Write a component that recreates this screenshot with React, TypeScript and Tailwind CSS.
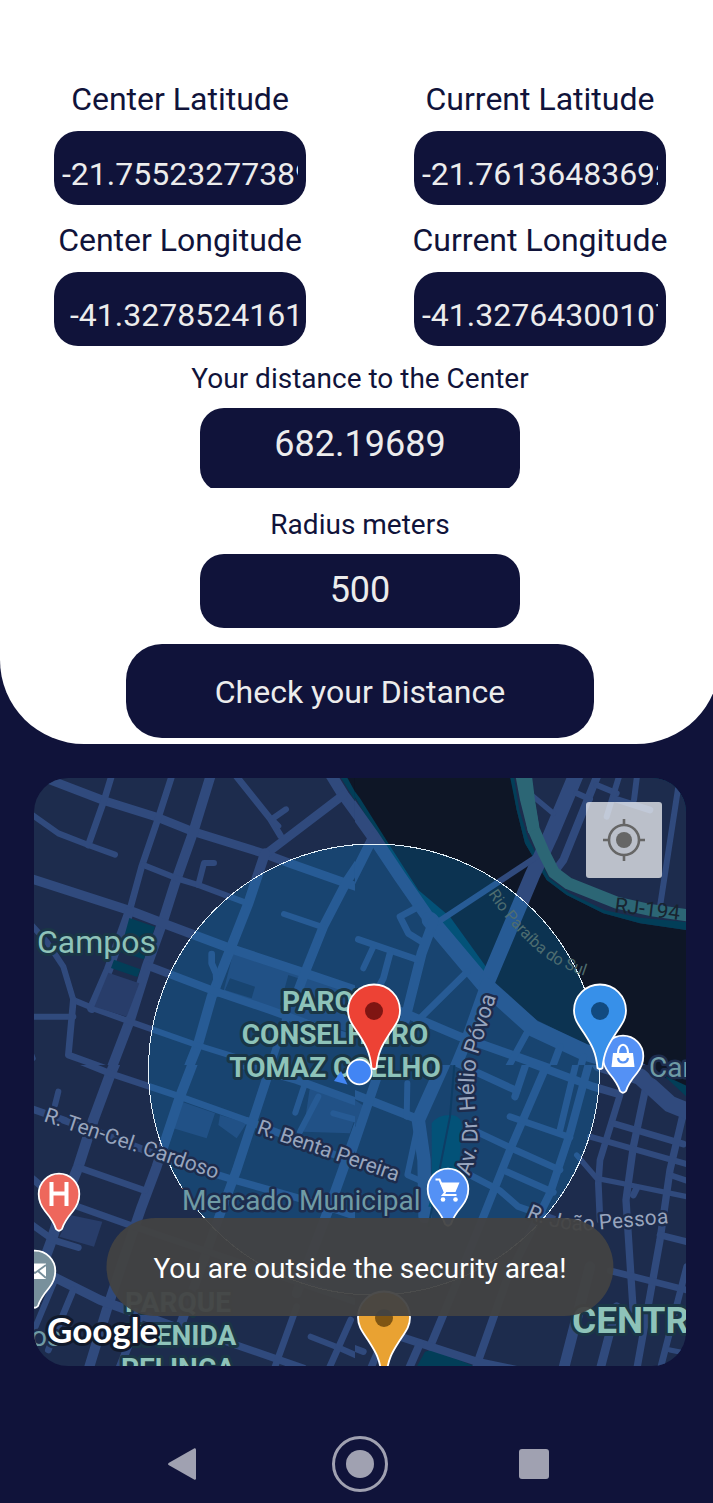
import type { ReactNode } from 'react';

type Road = [width: number, d: string];

const LAND = '#1d2c4d';
const ROAD = '#304a7d';
const PARK = '#023e58';
const WATER = '#0e1626';
const BLOCK = '#283d6a';
const HIGHWAY = '#2c6675';

const northWest: Road[] = [
  [26, 'M40 22 222 92 385 143 490 185 700 250 780 280 950 340 1010 360'],
  [20, 'M247 10 222 92 175 225'],
  [18, 'M0 130 85 190 175 225 255 254'],
  [20, 'M428 10 385 143 335 290 298 425'],
  [30, 'M544 10 490 185 435 340 400 450 350 590 300 750 235 920'],
  [28, 'M0 325 300 422 400 460 600 535 820 608 1010 672'],
  [18, 'M340 285 440 325 505 345 645 397'],
  [18, 'M505 345 522 279 552 279'],
  [20, 'M612 10 720 145 752 198'],
  [18, 'M768 118 725 148 745 168'],
  [34, 'M900 10 940 75 1010 170'],
  [26, 'M940 75 710 250'],
  [30, 'M705 250 655 400 600 540 545 680 505 820 465 920'],
  [28, 'M1040 200 950 335 880 470 820 620 805 660'],
  [18, 'M762 432 880 472'],
  [20, 'M545 552 545 580 558 610 562 670'],
  [24, 'M355 588 550 662 720 720 900 785 1000 815'],
  [28, 'M298 425 235 600 185 715'],
  [18, 'M0 460 50 515 100 590 130 690 190 715 300 755 500 825 620 862'],
  [18, 'M0 740 130 740'],
  [20, 'M130 690 115 855 240 900'],
  [18, 'M0 845 8 865'],
  [22, 'M770 740 730 860'],
];

const northEast: Road[] = [
  [38, 'M-30 60 70 200 150 320 240 450'],
  [50, 'M240 450 400 640 550 775 700 845 850 890 1030 1010'],
  [46, 'M680 10 600 200 545 320 410 640'],
  [34, 'M410 640 350 810 300 930'],
  [18, 'M250 465 560 260'],
  [20, 'M215 405 150 440 175 490 215 515'],
  [30, 'M250 455 215 550 165 750'],
  [20, 'M25 508 200 568'],
  [18, 'M70 530 40 595'],
  [20, 'M120 550 100 625 60 700'],
  [20, 'M352 605 200 755'],
  [26, 'M130 715 330 800 640 910'],
  [20, 'M530 790 470 900'],
  [22, 'M630 830 600 910'],
  [22, 'M700 860 685 920'],
  [30, 'M70 200 0 340'],
  [16, 'M548 78 610 130'],
  [24, 'M745 10 640 270 610 310'],
  [18, 'M680 70 720 88'],
  [18, 'M740 45 800 70'],
  [18, 'M810 10 770 140'],
  [18, 'M862 10 852 90'],
  [20, 'M790 85 900 120'],
  [18, 'M985 50 930 410'],
];

const southWest: Road[] = [
  [32, 'M268 -20 240 45 190 180 145 320 100 430 65 540 10 690'],
  [20, 'M90 -20 240 40 450 110 660 185'],
  [30, 'M500 -20 450 110 380 320 335 440 280 600 230 750 175 930'],
  [22, 'M0 145 200 215 420 300 620 362 860 430 1010 480'],
  [18, 'M85 95 75 135'],
  [20, 'M145 322 345 392'],
  [28, 'M735 -20 620 330 560 490 450 800'],
  [18, 'M825 70 796 158'],
  [18, 'M865 110 810 215'],
  [24, 'M620 10 800 60 1020 140'],
  [30, 'M1060 30 985 200 910 410 800 700'],
  [18, 'M910 160 1010 188'],
  [22, 'M650 182 1110 360'],
  [20, 'M130 435 290 492 460 550 990 730'],
  [22, 'M0 350 60 400'],
  [20, 'M0 490 70 540 145 563'],
  [28, 'M50 640 210 720 430 800'],
  [18, 'M0 840 75 660'],
  [20, 'M130 690 55 870'],
  [24, 'M330 770 270 920'],
  [20, 'M440 810 560 850'],
  [22, 'M590 845 820 925'],
  [18, 'M842 830 930 865 1010 900'],
  [20, 'M962 780 895 930'],
  [20, 'M800 740 735 920'],
  [18, 'M0 890 30 920'],
];

const southEast: Road[] = [
  [26, 'M-20 90 210 180'],
  [18, 'M172 70 170 170'],
  [28, 'M105 -20 0 290'],
  [40, 'M295 -20 205 180 222 300 225 470'],
  [18, 'M205 190 172 345 240 375'],
  [22, 'M300 0 500 92'],
  [24, 'M300 -80 410 -40 730 80 805 102'],
  [24, 'M605 -20 480 270 400 470 290 740 240 860'],
  [24, 'M725 -20 660 220 600 400 470 660 380 915'],
  [20, 'M685 -20 630 210'],
  [22, 'M535 -10 495 110'],
  [20, 'M480 170 660 232'],
  [20, 'M380 215 500 272 630 330'],
  [20, 'M470 335 610 397'],
  [20, 'M350 340 450 392 505 440 620 480'],
  [20, 'M810 105 750 300 745 370 750 480'],
  [16, 'M680 285 740 355 840 375 1010 410'],
  [22, 'M890 70 850 260 828 420 850 760'],
  [20, 'M790 190 1000 252'],
  [18, 'M720 230 1010 312'],
  [22, 'M1000 160 960 330 930 540 860 930'],
  [20, 'M850 405 860 385'],
  [20, 'M780 632 1010 690'],
  [20, 'M930 525 1010 545'],
  [18, 'M960 345 1010 362'],
  [20, 'M1010 620 930 930'],
  [24, 'M150 830 380 905 500 930'],
  [32, 'M640 930 720 620'],
  [26, 'M750 930 800 740'],
  [24, 'M210 850 175 930'],
  [20, 'M0 860 40 875'],
  [22, 'M90 860 60 930'],
  [50, 'M750 10 870 50 960 132 1030 160'],
  [16, 'M960 870 1010 880'],
];

function Roads({ list }: { list: Road[] }) {
  return (
    <g fill="none" stroke={ROAD} strokeLinecap="round" strokeLinejoin="round">
      {list.map(([width, d]) => (
        <path key={d} d={d} strokeWidth={width} />
      ))}
    </g>
  );
}

function Tile({ id, x, y, box, children }: { id: string; x: number; y: number; box: [number, number, number, number]; children: ReactNode }) {
  return (
    <g transform={`translate(${x} ${y}) scale(0.33333)`}>
      <clipPath id={id}>
        <rect x={box[0]} y={box[1]} width={box[2]} height={box[3]} />
      </clipPath>
      <g clipPath={`url(#${id})`}>{children}</g>
    </g>
  );
}

function Pin({ x, y, fill, dot }: { x: number; y: number; fill: string; dot: string }) {
  return (
    <g transform={`translate(${x} ${y})`}>
      <path
        d="M-2.5 -1C-4 -18 -9 -25 -16 -36C-22 -45 -26 -50 -26 -58.500A26 26 0 0 1 26 -58.500C26 -50 22 -45 16 -36C9 -25 4 -18 2.500 -1Q0 1 -2.500 -1Z"
        fill={fill}
        stroke="#fff"
        strokeWidth="1.800"
      />
      <circle cy="-58" r="9" fill={dot} />
    </g>
  );
}

function PoiPin({ x, y, fill, children }: { x: number; y: number; fill: string; children: ReactNode }) {
  return (
    <g transform={`translate(${x} ${y})`}>
      <path
        d="M-3 35C-5 28 -9 23 -14 17C-18 12 -20.300 7 -20.300 0A20.300 20.300 0 0 1 20.300 0C20.300 7 18 12 14 17C9 23 5 28 3 35Q0 38.500 -3 35Z"
        fill={fill}
        stroke="#fff"
        strokeWidth="1.800"
      />
      {children}
    </g>
  );
}

function MapDrawing() {
  return (
    <svg viewBox="34 778 652 588" preserveAspectRatio="xMidYMid slice" className="block size-full font-['Roboto',sans-serif]" role="img" aria-label="Map">
      <rect x="34" y="778" width="652" height="588" fill={LAND} />

      <Tile id="nw" x={30} y={770} box={[0, 0, 975, 885]}>
        <path d="M610 548 800 610 1000 680 1000 800 740 720 580 665Z" fill={BLOCK} />
        <path d="M600 625 675 650 665 685 585 660Z" fill={LAND} />
        <path d="M775 615 805 625 780 715 750 705Z" fill={LAND} />
        <path d="M925 10 1010 10 1010 150Z" fill={PARK} />
        <path d="M945 10 1010 10 1010 130Z" fill={WATER} />
        <Roads list={northWest} />
        <path d="M235 608 328 640 290 740 193 710Z" fill={BLOCK} />
        <path d="M298 444 375 470 342 568 270 545ZM252 569 331 598 322 621 243 594Z" fill={PARK} />
      </Tile>

      <Tile id="ne" x={350} y={770} box={[15, 0, 1020, 885]}>
        <path d="M-40 0 480 0 500 120 525 220 590 330 650 375 760 430 870 460 1020 482V960L850 890 700 820 560 750 400 620 200 360Z" fill={WATER} />
        <path d="M-40 -10 30 85 115 220 205 360 300 440 415 600 400 640 240 450 100 225Z" fill={PARK} />
        <path d="M478 10H1020V482L870 460 760 430 650 375 590 330 525 220 500 120Z" fill={PARK} />
        <path d="M490 10 508 120 534 205 598 325 656 368 765 421 870 443 1020 457V0Z" fill={LAND} />
        <Roads list={northEast} />
        <path d="M521 10 550 175 580 245 612 308 655 340 800 398 900 420 1020 437" fill="none" stroke={HIGHWAY} strokeWidth="36" strokeLinejoin="round" />
        <path d="M495 10H545L555 90 568 170 535 190 510 90Z" fill={HIGHWAY} />
      </Tile>

      <Tile id="sw" x={30} y={1060} box={[0, 15, 975, 930]}>
        <path d="M440 120 555 160 530 235 430 205ZM570 165 650 190 620 235 565 195ZM840 80 990 130 960 220 820 215Z" fill={BLOCK} />
        <path d="M120 465 217 485 192 560 88 530Z" fill={BLOCK} />
        <Roads list={southWest} />
      </Tile>

      <Tile id="se" x={350} y={1060} box={[15, 15, 1020, 930]}>
        <path d="M0 110 45 140 25 200 0 190Z" fill={BLOCK} />
        <path d="M890 0H1020V85L940 50Z" fill={WATER} />
        <path d="M940 45 1020 82V120Z" fill={PARK} />
        <path d="M195 930 225 875 250 868 400 930Z" fill={PARK} />
        <Roads list={southEast} />
        <path d="M245 190Q262 165 300 165Q335 165 335 200L320 440H235L246 400Z" fill={PARK} />
        <path d="M316 -20 300 170 235 500" fill="none" stroke="#10233f" strokeWidth="6" />
      </Tile>

      <circle cx="374" cy="1069.500" r="225.500" fill="rgba(7,157,239,0.22)" stroke="#e8f4fb" strokeWidth="1" shapeRendering="crispEdges" />

      <g fill="#98a5be" stroke={LAND} strokeWidth="5" strokeLinejoin="round" paintOrder="stroke" fontSize="21">
        <text transform="translate(43 1121) rotate(18.500)">R. Ten-Cel. Cardoso</text>
        <text transform="translate(256 1133) rotate(19)">R. Benta Pereira</text>
        <path id="helio" d="M469 1176Q481 1150 476 1115Q471 1075 480 1048L503 975" fill="none" stroke="none" />
        <text fontSize="22">
          <textPath href="#helio">Av. Dr. Hélio Póvoa</textPath>
        </text>
        <path id="joao" d="M526 1217Q560 1233 595 1230Q630 1227 690 1221" fill="none" stroke="none" />
        <text>
          <textPath href="#joao">R. João Pessoa</textPath>
        </text>
      </g>
      <path id="rio" d="M488 894Q512 930 542 955Q560 970 612 984" fill="none" />
      <text fill="#4e6d70" fontSize="16">
        <textPath href="#rio">Rio Paraíba do Sul</textPath>
      </text>
      <text fill="#182430" fontSize="21" transform="translate(614 912) rotate(7)">RJ-194</text>

      <g fill="#8ec3b9" stroke="#1a3646" strokeWidth="6" strokeLinejoin="round" paintOrder="stroke">
        <text x="37" y="953" fontSize="32">Campos</text>
        <g fontSize="28" fontWeight="700" textAnchor="middle">
          <text x="335" y="1011">PARQUE</text>
          <text x="335" y="1044">CONSELHEIRO</text>
          <text x="335" y="1077">TOMAZ COELHO</text>
          <text x="178" y="1312">PARQUE</text>
          <text x="178" y="1345">AVENIDA</text>
          <text x="178" y="1378">PELINCA</text>
        </g>
        <text x="572" y="1333" fontSize="37" fontWeight="700">CENTRO</text>
      </g>
      <g fill="#6f9ba5" stroke={LAND} strokeWidth="5" strokeLinejoin="round" paintOrder="stroke" fontSize="28">
        <text x="182" y="1210">Mercado Municipal</text>
        <text x="649" y="1077">Cam</text>
        <text x="31" y="1346">os</text>
      </g>

      <PoiPin x={59} y={1194} fill="#ee675c">
        <path d="M-7.500 -12V12M7.500 -12V12M-7.500 -.5H7.500" stroke="#fff" strokeWidth="4" fill="none" />
      </PoiPin>
      <PoiPin x={35} y={1271} fill="#78909c">
        <path d="M-11 -7.500H11V8H-11Z" fill="#fff" />
        <path d="M-11 -6 0 2 11 -6M3 0 11 7M-3 0 -11 7" fill="none" stroke="#78909c" strokeWidth="1.800" />
      </PoiPin>
      <PoiPin x={448} y={1189} fill="#5491f5">
        <path d="M-12.500 -9.500H-8.500L-3 3.500-5 6H8.500" fill="none" stroke="#fff" strokeWidth="2" />
        <path d="M-8 -6.500H11.500L7.500 3H-4Z" fill="#fff" />
        <circle cx="-5" cy="10.500" r="2.300" fill="#fff" />
        <circle cx="7.500" cy="10.500" r="2.300" fill="#fff" />
      </PoiPin>
      <PoiPin x={623} y={1056} fill="#5491f5">
        <path d="M-10 -3H10L11.500 11H-11.500Z" fill="#fff" />
        <path d="M-5 -3C-5 -14 5 -14 5 -3" fill="none" stroke="#fff" strokeWidth="2.200" />
        <path d="M-5 2C-4 8 4 8 5 2" fill="none" stroke="#5491f5" strokeWidth="2.200" />
      </PoiPin>

      <Pin x={600} y={1069} fill="#3790e9" dot="#114a80" />
      <Pin x={374} y={1069} fill="#ed4235" dot="#7f1512" />
      <Pin x={384} y={1376} fill="#e9a232" dot="#7f5513" />
      <path d="M341 1071 334 1081 347.500 1084.500Z" fill="#4285f4" />
      <circle cx="359.500" cy="1072" r="12.300" fill="#4285f4" stroke="#fff" strokeWidth="1.800" />

      <text x="47" y="1343" fontSize="35" fontWeight="700" className="font-['Lato',sans-serif]" fill="#fff" stroke="#111a2c" strokeWidth="6" strokeLinejoin="round" paintOrder="stroke">
        Google
      </text>
    </svg>
  );
}

const field = 'block h-[74px] rounded-3xl bg-[#10133a] text-[#ececec] outline-none';

function Coordinate({ id, label, value, inset = 'px-2' }: { id: string; label: string; value: string; inset?: string }) {
  return (
    <div className="flex flex-col items-center">
      <label htmlFor={id} className="mb-3 text-[32px] leading-[39px] whitespace-nowrap">
        {label}
      </label>
      <input id={id} defaultValue={value} className={`${field} ${inset} w-[70%] pt-3 text-[32px]`} />
    </div>
  );
}

export default function App() {
  return (
    <div className="overflow-hidden bg-[#10133a] font-['Roboto',sans-serif] text-[#10133a]">
      <div className="-mr-[7px]">
        <form className="flex flex-col items-center rounded-b-[84px] bg-white pt-20 pb-[6px]" onSubmit={(e) => e.preventDefault()}>
          <div className="grid w-full grid-cols-2 gap-y-4">
            <Coordinate id="center-lat" label="Center Latitude" value="-21.7552327738934" />
            <Coordinate id="current-lat" label="Current Latitude" value="-21.7613648369237" />
            <Coordinate id="center-lng" label="Center Longitude" value="-41.32785241617" inset="pl-4 pr-2" />
            <Coordinate id="current-lng" label="Current Longitude" value="-41.3276430010789" />
          </div>

          <label htmlFor="distance" className="mt-4 mb-3 text-[28px] leading-[34px]">
            Your distance to the Center
          </label>
          <div className="h-20 w-[320px] max-w-full overflow-hidden">
            <input id="distance" readOnly value="682.19689" className="block h-[84px] w-full rounded-3xl bg-[#10133a] pb-3 text-center text-[36px] text-[#ececec] outline-none" />
          </div>

          <label htmlFor="radius" className="mt-5 mb-3 text-[28px] leading-[34px]">
            Radius meters
          </label>
          <input id="radius" defaultValue="500" className={`${field} w-[320px] max-w-full pb-[2px] text-center text-[36px]`} />

          <button type="submit" className="mt-4 h-[94px] w-[65%] rounded-[36px] bg-[#10133a] pt-[2px] text-[32px] text-[#ececec]">
            Check your Distance
          </button>
        </form>

        <main className="relative mx-[34px] mt-[34px] aspect-[652/588] overflow-hidden rounded-[34px]">
          <MapDrawing />
          <button type="button" aria-label="My location" className="absolute top-6 right-6 flex size-[76px] items-center justify-center rounded-[3px] bg-white/70">
            <svg viewBox="0 0 42 42" className="size-[42px]" fill="none" stroke="#666" strokeWidth="2.600">
              <circle cx="21" cy="21" r="15" />
              <circle cx="21" cy="21" r="8" fill="#666" stroke="none" />
              <path d="M21 0V6M21 36V42M0 21H6M36 21H42" />
            </svg>
          </button>
          <div role="status" className="absolute bottom-[50px] left-1/2 flex h-[98px] -translate-x-1/2 items-center rounded-full bg-[#424242]/95 px-[47px] pt-1 text-[28px] whitespace-nowrap text-white">
            You are outside the security area!
          </div>
        </main>

        <nav className="mt-[68px] flex h-[69px] items-center justify-center gap-[122px] pr-2 pb-[9px]">
          <button type="button" aria-label="Back" className="flex size-14 items-center justify-center">
            <svg viewBox="0 0 28 32" className="h-8 w-7">
              <path d="M26.500 .3Q28 0 28 1.800V30.200Q28 32 26.500 31.700L1 17.300Q-1 16 1 14.700Z" fill="#a0a1b1" />
            </svg>
          </button>
          <button type="button" aria-label="Home" className="flex size-14 items-center justify-center rounded-full border-[3px] border-[#a0a1b1]">
            <span className="size-7 rounded-full bg-[#a0a1b1]" />
          </button>
          <button type="button" aria-label="Recent apps" className="flex h-14 w-12 items-center justify-center">
            <span className="size-[30px] rounded-[3px] bg-[#a0a1b1]" />
          </button>
        </nav>
      </div>
    </div>
  );
}
